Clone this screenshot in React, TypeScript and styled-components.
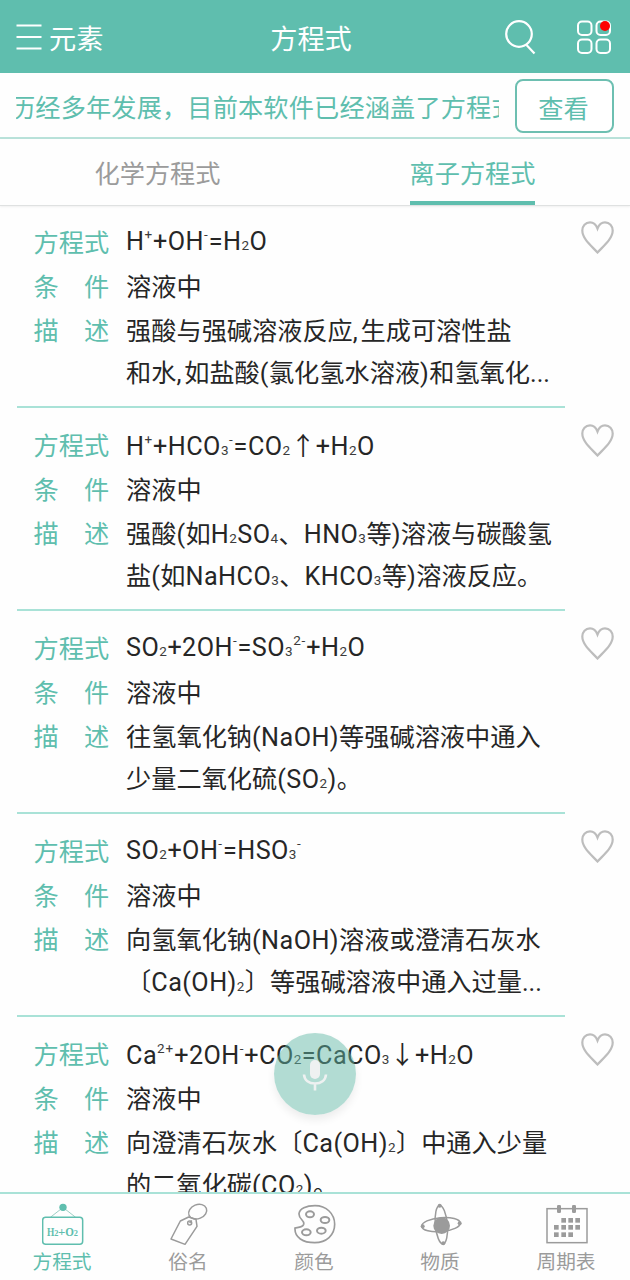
import React from "react";
import styled, { createGlobalStyle } from "styled-components";

const TEAL = "#5fbeae";
const GREY = "#9b9b9b";

const GlobalStyle = createGlobalStyle`
  * { box-sizing: border-box; }
  body {
    margin: 0;
    background: #fff;
    font-family: Roboto, "Noto Sans CJK SC", sans-serif;
    font-weight: 400;
    color: #262626;
  }
`;

const Screen = styled.div`
  width: 630px;
  height: 1280px;
  display: flex;
  flex-direction: column;
  overflow: hidden;
  background: #fefefe;
`;

const Header = styled.header`
  flex: none;
  height: 73px;
  padding: 0 16px;
  display: grid;
  grid-template-columns: 1fr auto 1fr;
  align-items: center;
  background: ${TEAL};
  color: #fff;
  font-size: 27.2px;
  line-height: 40px;
`;

const MenuButton = styled.div`
  display: flex;
  align-items: center;
  gap: 7px;
  padding-top: 6px;
  svg { margin-bottom: 5px; }
`;

const Title = styled.div`
  padding: 6px 8px 0 0;
`;

const HeaderActions = styled.div`
  display: flex;
  justify-content: flex-end;
  align-items: center;
  gap: 38px;
  padding-right: 2px;
`;

const Notice = styled.section`
  flex: none;
  height: 66px;
  padding: 2px 16px 0;
  display: flex;
  align-items: center;
  justify-content: space-between;
  border-bottom: 2px solid #b9e2da;
  color: ${TEAL};
  font-size: 25.2px;
`;

const Marquee = styled.div`
  width: 483px;
  overflow: hidden;
  white-space: nowrap;
  display: flex;
  line-height: 38px;
  padding-top: 6px;
  letter-spacing: 0.15px;
`;

const MarqueeText = styled.span`
  margin-left: -6px;
`;

const ViewButton = styled.button`
  width: 99px;
  height: 54px;
  padding: 1px 2px 0 0;
  border: 2px solid #6dbfb1;
  border-radius: 8px;
  background: #fff;
  color: ${TEAL};
  font: inherit;
`;

const Tabs = styled.nav`
  flex: none;
  height: 67px;
  display: grid;
  grid-template-columns: 1fr 1fr;
  justify-items: center;
  border-bottom: 1px solid #dfe1e1;
  box-shadow: 0 1px 2px rgba(0, 0, 0, 0.06);
`;

const Tab = styled.div<{ $active?: boolean }>`
  height: 66px;
  padding-top: 17px;
  font-size: 25.2px;
  line-height: 38px;
  color: ${(p) => (p.$active ? TEAL : GREY)};
  border-bottom: 4px solid ${(p) => (p.$active ? TEAL : "transparent")};
`;

const List = styled.main`
  flex: 1;
  min-height: 0;
  overflow: hidden;
`;

const Item = styled.article`
  height: 203px;
  padding: 0 16px 0 17px;
  display: flex;
  justify-content: space-between;
  &:first-child { margin-top: -1px; }
`;

const ItemBody = styled.div`
  width: 548px;
  padding: 17px 0 0 17px;
  border-bottom: 2px solid #a9e2d7;
  font-size: 25.2px;
  white-space: nowrap;
`;

const Row = styled.div`
  display: flex;
  height: 44px;
`;

const Label = styled.div`
  width: 75.6px;
  margin: 0 17px 0 -0.5px;
  display: flex;
  justify-content: space-between;
  line-height: 44px;
  color: ${TEAL};
`;

const Value = styled.div<{ $shift?: number }>`
  line-height: 42px;
  margin-top: ${(p) => p.$shift ?? 1}px;
`;

const Line = styled.div`
  height: 42px;
`;

const spacing = (text: string) => {
  if (text === ",") return "2.8px";
  return text === "..." ? "0" : "0.45px";
};

const Latin = styled.span<{ $spacing: string }>`
  letter-spacing: ${(p) => p.$spacing};
`;

const Small = styled.span<{ $raised?: boolean }>`
  font-size: 13.5px;
  line-height: 1;
  letter-spacing: ${(p) => (p.$raised ? "0.9px" : "0.5px")};
  color: #3a3a3a;
  position: relative;
  top: ${(p) => (p.$raised ? "-11px" : "0")};
`;

const Like = styled.div`
  padding-top: 16px;
`;

const TabBar = styled.footer`
  flex: none;
  height: 88px;
  display: grid;
  grid-template-columns: repeat(5, 126px);
  border-top: 2px solid #a9e2d7;
  background: #fefefe;
`;

const BarItem = styled.div<{ $active?: boolean }>`
  display: flex;
  flex-direction: column;
  align-items: center;
  padding-top: 8px;
  color: ${(p) => (p.$active ? TEAL : GREY)};
  font-size: 19.7px;
  line-height: 30px;
`;

const BarLabel = styled.span`
  margin: 2px 2px 0 0;
`;

const VoiceButton = styled.div`
  position: absolute;
  left: 274px;
  top: 1033px;
  width: 82px;
  height: 82px;
  border-radius: 50%;
  display: flex;
  justify-content: center;
  align-items: center;
  background: rgba(96, 183, 166, 0.48);
  box-shadow: 0 5px 9px rgba(0, 0, 0, 0.07);
`;

const HeartIcon = () => (
  <svg width="33" height="33" viewBox="0 0 33 33" fill="none" stroke="#bdbdbd" strokeWidth="2.200">
    <path d="M16.500 7.500C15 3.500 12.300 1.300 9 1.300C4.500 1.300 1.300 4.800 1.300 9.500C1.300 17.500 10 24.500 16.500 31.500C23 24.500 31.700 17.500 31.700 9.500C31.700 4.800 28.500 1.300 24 1.300C20.700 1.300 18 3.500 16.500 7.500Z" />
  </svg>
);

const icons = {
  formula: (
    <svg width="42" height="44" viewBox="126 36 126 132" fill="none" stroke={TEAL} strokeWidth="4.500">
      <path d="M151 82L183 57M227 82L195 57" strokeWidth="3" stroke="#9ccfc5" />
      <circle cx="189" cy="52" r="11" fill={TEAL} stroke="none" />
      <rect x="128" y="82" width="120" height="81" rx="9" />
      <g fontFamily="Liberation Serif, serif" fontWeight="700" fill={TEAL} stroke="none">
        <text x="141" y="137" fontSize="38" textLength="22" lengthAdjust="spacingAndGlyphs">H</text>
        <text x="163" y="139" fontSize="25">2</text>
        <text x="174" y="137" fontSize="36" textLength="22" lengthAdjust="spacingAndGlyphs">+</text>
        <text x="196" y="137" fontSize="38" textLength="26" lengthAdjust="spacingAndGlyphs">O</text>
        <text x="221" y="139" fontSize="25">2</text>
      </g>
    </svg>
  ),
  tag: (
    <svg width="42" height="44" viewBox="504 36 126 132" fill="none" stroke={GREY} strokeWidth="4.500" strokeLinejoin="round">
      <path d="M541 93L566 81L588 88L591 109L555 163L513 147Z" />
      <ellipse cx="593" cy="65" rx="28" ry="21" transform="rotate(-22 593 65)" />
      <circle cx="569" cy="99" r="6" />
      <path d="M569 99L575 91" />
    </svg>
  ),
  palette: (
    <svg width="42" height="44" viewBox="252 36 126 132" fill="none" stroke={GREY} strokeWidth="5">
      <path d="M315 47C349 47 374 71 374 103C374 136 349 158 314 158C280 158 253 143 255 114C264 112 277 113 281 103C285 91 266 88 267 71C269 56 288 47 315 47Z" />
      <g strokeWidth="6">
        <ellipse cx="300" cy="73" rx="12" ry="9" />
        <ellipse cx="345" cy="90" rx="13" ry="9" />
        <ellipse cx="334" cy="122" rx="13" ry="9" />
        <ellipse cx="289" cy="127" rx="13" ry="9" />
      </g>
    </svg>
  ),
  atom: (
    <svg width="42" height="44" viewBox="0 36 126 132" fill="none" stroke={GREY} strokeWidth="4.500">
      <ellipse cx="64" cy="104" rx="18" ry="58" transform="rotate(-5 64 104)" />
      <ellipse cx="63" cy="104" rx="58" ry="21" transform="rotate(-5 63 104)" />
      <g fill={GREY} stroke="none">
        <circle cx="65" cy="107" r="25" />
        <circle cx="59" cy="47" r="6" />
        <circle cx="70" cy="160" r="6" />
        <circle cx="119" cy="100" r="6" />
        <circle cx="8" cy="109" r="6" />
      </g>
    </svg>
  ),
  calendar: (
    <svg width="42" height="44" viewBox="378 36 126 132" fill="none" stroke={GREY} strokeWidth="4.500">
      <rect x="381" y="56" width="120" height="102" />
      <g fill={GREY} stroke="none">
        <rect x="411" y="45" width="12" height="24" rx="4" />
        <rect x="456" y="45" width="12" height="24" rx="4" />
        {[
          [424, 84], [445, 84], [466, 84],
          [402, 105], [424, 105], [445, 105], [466, 105],
          [402, 127], [424, 127], [445, 127],
        ].map(([x, y]) => (
          <rect key={`${x}-${y}`} x={x} y={y} width="14" height="14" />
        ))}
      </g>
    </svg>
  ),
};

/* "_" lowers and "^" raises the characters inside the braces that follow. */
const Formula = ({ text }: { text: string }) => (
  <>
    {text.split(/([_^]\{[^}]*\}|,|[A-Za-z0-9+=().]+)/).map((part, i) => {
      if (/^[_^]\{/.test(part)) {
        return <Small key={i} $raised={part[0] === "^"}>{part.slice(2, -1)}</Small>;
      }
      if (/^[,A-Za-z0-9+=().]/.test(part)) {
        return <Latin key={i} $spacing={spacing(part)}>{part}</Latin>;
      }
      return <React.Fragment key={i}>{part}</React.Fragment>;
    })}
  </>
);

const equations = [
  { eq: "H^{+}+OH^{-}=H_{2}O", shift: -1, lines: ["强酸与强碱溶液反应,生成可溶性盐", "和水,如盐酸(氯化氢水溶液)和氢氧化..."] },
  { eq: "H^{+}+HCO_{3}^{-}=CO_{2}↑+H_{2}O", shift: 1, lines: ["强酸(如H_{2}SO_{4}、HNO_{3}等)溶液与碳酸氢", "盐(如NaHCO_{3}、KHCO_{3}等)溶液反应。"] },
  { eq: "SO_{2}+2OH^{-}=SO_{3}^{2-}+H_{2}O", shift: -1, lines: ["往氢氧化钠(NaOH)等强碱溶液中通入", "少量二氧化硫(SO_{2})。"] },
  { eq: "SO_{2}+OH^{-}=HSO_{3}^{-}", shift: -1, lines: ["向氢氧化钠(NaOH)溶液或澄清石灰水", "〔Ca(OH)_{2}〕等强碱溶液中通入过量..."] },
  { eq: "Ca^{2+}+2OH^{-}+CO_{2}=CaCO_{3}↓+H_{2}O", shift: 1, lines: ["向澄清石灰水〔Ca(OH)_{2}〕中通入少量", "的二氧化碳(CO_{2})。"] },
];

const barItems = [
  { icon: icons.formula, label: "方程式", active: true },
  { icon: icons.tag, label: "俗名" },
  { icon: icons.palette, label: "颜色" },
  { icon: icons.atom, label: "物质" },
  { icon: icons.calendar, label: "周期表" },
];

export default function App() {
  return (
    <Screen>
      <GlobalStyle />
      <Header>
        <MenuButton>
          <svg width="26" height="26" viewBox="0 0 26 26" stroke="#fff" strokeWidth="2.200">
            <path d="M0.500 1.500H25.500M0.500 13H25.500M0.500 24.500H25.500" />
          </svg>
          元素
        </MenuButton>
        <Title>方程式</Title>
        <HeaderActions>
          <svg width="34" height="36" viewBox="0 0 34 36" fill="none" stroke="#fff" strokeWidth="2.200">
            <circle cx="15" cy="15" r="12.800" />
            <path d="M22.500 26L30.500 34.500" />
          </svg>
          <svg width="36" height="36" viewBox="0 0 36 36" fill="none" stroke="#fff" strokeWidth="2">
            <rect x="2" y="2.500" width="13.500" height="13.500" rx="4" />
            <rect x="20.500" y="2.500" width="13.500" height="13.500" rx="4" />
            <rect x="2" y="20.500" width="13.500" height="13.500" rx="4" />
            <rect x="20.500" y="20.500" width="13.500" height="13.500" rx="4" />
            <circle cx="29" cy="7" r="5" fill="#fe0000" stroke="none" />
          </svg>
        </HeaderActions>
      </Header>
      <Notice>
        <Marquee>
          <MarqueeText>历经多年发展，目前本软件已经涵盖了方程式</MarqueeText>
        </Marquee>
        <ViewButton>查看</ViewButton>
      </Notice>
      <Tabs>
        <Tab>化学方程式</Tab>
        <Tab $active>离子方程式</Tab>
      </Tabs>
      <List>
        {equations.map(({ eq, shift, lines }) => (
          <Item key={eq}>
            <ItemBody>
              <Row>
                <Label>方程式</Label>
                <Value $shift={shift}><Formula text={eq} /></Value>
              </Row>
              <Row>
                <Label><span>条</span><span>件</span></Label>
                <Value>溶液中</Value>
              </Row>
              <Row>
                <Label><span>描</span><span>述</span></Label>
                <Value>
                  {lines.map((line) => (
                    <Line key={line}><Formula text={line} /></Line>
                  ))}
                </Value>
              </Row>
            </ItemBody>
            <Like><HeartIcon /></Like>
          </Item>
        ))}
      </List>
      <TabBar>
        {barItems.map(({ icon, label, active }) => (
          <BarItem key={label} $active={active}>
            {icon}
            <BarLabel>{label}</BarLabel>
          </BarItem>
        ))}
      </TabBar>
      <VoiceButton>
        <svg width="26" height="34" viewBox="0 0 26 34" fill="none" stroke="#eef1f1" strokeWidth="2.600">
          <rect x="8" y="3" width="10" height="19" rx="5" fill="#eef1f1" stroke="none" />
          <path d="M2 17.500C2.500 23.500 7 26.500 13 26.500S23.500 23.500 24 17.500M13 26.500V33.500" />
        </svg>
      </VoiceButton>
    </Screen>
  );
}
